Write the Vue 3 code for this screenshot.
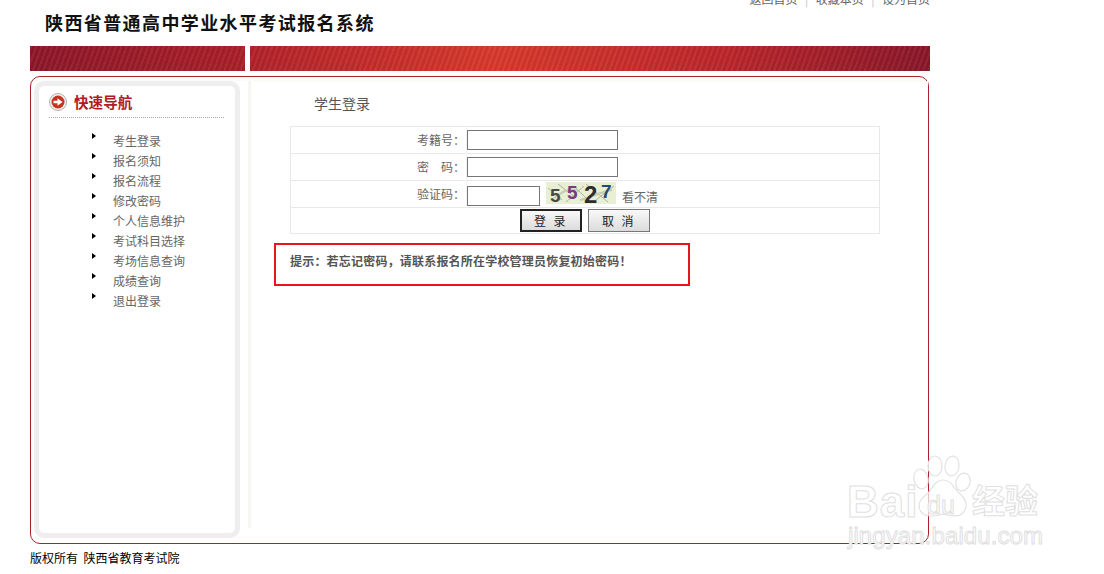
<script setup>
const menu = ['考生登录', '报名须知', '报名流程', '修改密码', '个人信息维护', '考试科目选择', '考场信息查询', '成绩查询', '退出登录']
</script>

<template>
  <div class="page">
    <header class="head">
      <nav class="links">
        <span>返回首页</span><i>|</i><span>收藏本页</span><i>|</i><span>设为首页</span>
      </nav>
      <h1 class="sys">陕西省普通高中学业水平考试报名系统</h1>
    </header>

    <div class="banner">
      <div class="b-left"></div>
      <div class="b-right"></div>
    </div>

    <main class="box">
      <aside class="side">
        <div class="side-title">
          <svg class="arrow" width="18" height="18" viewBox="0 0 18 18">
            <circle cx="9" cy="9" r="8.5" fill="#f4f1ee" stroke="#b5b0ab" />
            <circle cx="9" cy="9" r="6.5" fill="#c8331f" />
            <path d="M4.5 7.8h4V5.2L13.5 9l-5 3.8v-2.6h-4z" fill="#fff" />
          </svg>
          <span>快速导航</span>
        </div>
        <ul class="menu">
          <li v-for="m in menu" :key="m"><b class="tri"></b><span>{{ m }}</span></li>
        </ul>
      </aside>

      <section class="panel">
        <h2 class="ttl">学生登录</h2>
        <table class="form">
          <tbody>
            <tr>
              <td class="lab">考籍号：</td>
              <td class="val"><input class="ipt" type="text" /></td>
            </tr>
            <tr>
              <td class="lab">密　码：</td>
              <td class="val"><input class="ipt" type="password" /></td>
            </tr>
            <tr>
              <td class="lab">验证码：</td>
              <td class="val">
                <div class="code-cell">
                  <input class="ipt short" type="text" />
                  <svg class="captcha" width="70" height="22" viewBox="0 0 70 22">
                    <rect width="70" height="22" fill="#e9efd2" />
                    <path d="M2 6 16 18M12 2l18 14M28 4l16 16M40 2 62 20M50 18 68 4M20 20 38 4" stroke="#a9b8a0" stroke-width="1" fill="none" />
                    <path d="M8 16c8-6 14-10 24-8M34 18c10-2 20-8 32-10" stroke="#c3cdb4" stroke-width="2" fill="none" />
                    <text x="4" y="20" class="dg" fill="#4a4a44">5</text>
                    <text x="21" y="17" class="dg" fill="#7a3a80">5</text>
                    <text x="38" y="21" class="dg big" fill="#2e2c30">2</text>
                    <text x="55" y="16" class="dg" fill="#264a72">7</text>
                  </svg>
                  <span class="blur">看不清</span>
                </div>
              </td>
            </tr>
            <tr>
              <td colspan="2" class="acts">
                <button class="btn on" type="button">登 录</button>
                <button class="btn" type="button">取 消</button>
              </td>
            </tr>
          </tbody>
        </table>
        <div class="notice">提示：若忘记密码，请联系报名所在学校管理员恢复初始密码！</div>
      </section>
    </main>

    <footer class="foot">版权所有&nbsp; 陕西省教育考试院</footer>

    <div class="mark">
      <svg class="paw" width="62" height="72" viewBox="0 0 62 72">
        <g fill="#fff" fill-opacity=".7" stroke="#e2e2e2" stroke-width="1.2">
          <ellipse cx="8" cy="24" rx="7" ry="10" transform="rotate(-12 8 24)" />
          <ellipse cx="22" cy="11" rx="7" ry="10" />
          <ellipse cx="39" cy="11" rx="7" ry="10" transform="rotate(8 39 11)" />
          <ellipse cx="50" cy="27" rx="7" ry="9" transform="rotate(18 50 27)" />
          <path d="M30 25c8 0 11 8 16 13 6 5 9 10 6 17-3 7-12 7-22 4-10 3-20 3-23-4-3-8 2-12 8-17 5-5 7-13 15-13z" />
        </g>
      </svg>
      <span class="w bai">Bai</span>
      <span class="w du">du</span>
      <span class="w jy">经验</span>
      <span class="w url">jingyan.baidu.com</span>
    </div>
  </div>
</template>

<style>
html, body { margin: 0; background: #fff; overflow: hidden; }
</style>

<style scoped>
.page {
  position: relative;
  width: 900px;
  height: 574px;
  margin-left: 30px;
  font-family: "Noto Sans CJK SC", "Liberation Sans", sans-serif;
  font-size: 12px;
  color: #666;
}
.head { height: 46px; overflow: hidden; }
.links {
  display: flex;
  justify-content: flex-end;
  height: 17px;
  margin-top: -10px;
  line-height: 17px;
  color: #666;
}
.links i { font-style: normal; color: #c4c4c4; margin: 0 7.5px; }
.sys {
  margin: 3px 0 0 15px;
  font-size: 18px;
  line-height: 24px;
  font-weight: 700;
  letter-spacing: 1.4px;
  color: #111;
  white-space: nowrap;
}
.banner { display: flex; gap: 5px; height: 25px; }
.b-left {
  width: 215px;
  background:
    repeating-linear-gradient(110deg, rgba(255,255,255,.05) 0 2px, rgba(0,0,0,.04) 2px 5px),
    linear-gradient(90deg, #8e1729, #ab2029);
}
.b-right {
  flex: 1;
  background:
    repeating-linear-gradient(110deg, rgba(255,255,255,.05) 0 2px, rgba(0,0,0,.04) 2px 5px),
    linear-gradient(90deg, #b2222a 0%, #d8392c 36%, #bc262b 70%, #8a1729 100%);
}
.box {
  display: flex;
  box-sizing: border-box;
  width: 899px;
  height: 468px;
  margin-top: 5px;
  padding: 4px 0 5px 3px;
  border: 1px solid #b0202c;
  border-radius: 10px;
  background: linear-gradient(#fbfbf7 0 4px, #fff 4px);
}
.side {
  box-sizing: border-box;
  width: 206px;
  flex: none;
  padding: 6px 11px 0 11px;
  border: 5px solid #eeeeee;
  border-radius: 10px;
  background: #fff;
}
.side-title {
  display: flex;
  align-items: center;
  gap: 7px;
  height: 20px;
  padding-bottom: 5px;
  margin-left: -1px;
  border-bottom: 1px dotted #aaa;
  color: #b01c26;
  font-size: 14.6px;
  line-height: 20px;
  font-weight: 700;
}
.arrow { flex: none; }
.menu { list-style: none; margin: 13px 0 0 0; padding: 0; }
.menu li {
  display: flex;
  height: 20px;
  line-height: 20px;
  color: #666;
}
.tri {
  flex: none;
  width: 0;
  height: 0;
  margin: 2px 0 0 42px;
  border-left: 4px solid #000;
  border-top: 3.5px solid transparent;
  border-bottom: 3.5px solid transparent;
}
.menu li span { margin-left: 17px; }
.panel {
  flex: 1;
  margin-left: 8px;
  margin-bottom: 10px;
  border-left: 3px solid #f7f7f2;
  background: linear-gradient(#fbfbf7 0 1px, #fff 1px);
}
.ttl {
  margin: 13px 0 0 63px;
  font-size: 14px;
  line-height: 18px;
  font-weight: 400;
  color: #555;
}
.form {
  width: 590px;
  margin: 14px 0 0 39px;
  border-collapse: collapse;
  table-layout: fixed;
  border: 1px solid #e8e8e8;
}
.form td { padding: 0; border-top: 1px solid #e8e8e8; height: 26px; }
.form .acts { height: 25px; }
.form .lab {
  width: 176px;
  padding: 0 1px 1px 0;
  text-align: right;
  border-right: 1px solid #f3f3f3;
  color: #666;
  vertical-align: middle;
  box-sizing: border-box;
}
.val { vertical-align: middle; }
.ipt {
  display: block;
  box-sizing: border-box;
  width: 151px;
  height: 20px;
  margin: 0;
  padding: 0;
  border: 1px solid #767676;
  background: #fff;
}
.ipt.short { width: 73px; margin-top: 5px; }
.code-cell { display: flex; align-items: flex-start; height: 26px; }
.captcha { margin: 1px 0 0 6px; flex: none; }
.dg { font: 700 19px "Liberation Sans", sans-serif; }
.dg.big { font-size: 24px; }
.blur { margin: 7px 0 0 6px; line-height: 18px; color: #666; }
.acts { text-align: center; vertical-align: middle; }
.btn {
  box-sizing: border-box;
  width: 62px;
  height: 23px;
  margin: 0 3px;
  padding: 0;
  border: 1px solid #777;
  background: linear-gradient(#f8f8f8, #dcdcdc);
  font: 12px "Noto Sans CJK SC", sans-serif;
  letter-spacing: 2.5px;
  color: #222;
  vertical-align: middle;
}
.btn.on { border: 2px solid #222; }
.notice {
  box-sizing: border-box;
  width: 416px;
  height: 43px;
  margin: 9px 0 0 23px;
  padding: 7px 0 0 14px;
  border: 2px solid #e8141e;
  font-weight: 700;
  line-height: 18px;
  letter-spacing: .2px;
  color: #555;
  white-space: nowrap;
}
.foot {
  margin-top: 5px;
  line-height: 18px;
  color: #000;
}
.mark {
  position: absolute;
  left: 810px;
  top: 450px;
  width: 210px;
  height: 105px;
  pointer-events: none;
}
.paw { position: absolute; left: 73px; top: 5px; }
.w {
  position: absolute;
  color: #fff;
  -webkit-text-stroke: 1px #e0e0e0;
  font-family: "Liberation Sans", sans-serif;
  font-weight: 700;
  line-height: 1;
  white-space: nowrap;
}
.bai { left: 7px; top: 30px; font-size: 44px; letter-spacing: 1px; }
.du { left: 87px; top: 43px; font-size: 25px; font-weight: 400; }
.jy { left: 132px; top: 33px; font-size: 33px; font-family: "Noto Sans CJK SC", sans-serif; }
.url { left: 8px; top: 74px; font-size: 24px; font-weight: 400; letter-spacing: .1px; }
</style>
